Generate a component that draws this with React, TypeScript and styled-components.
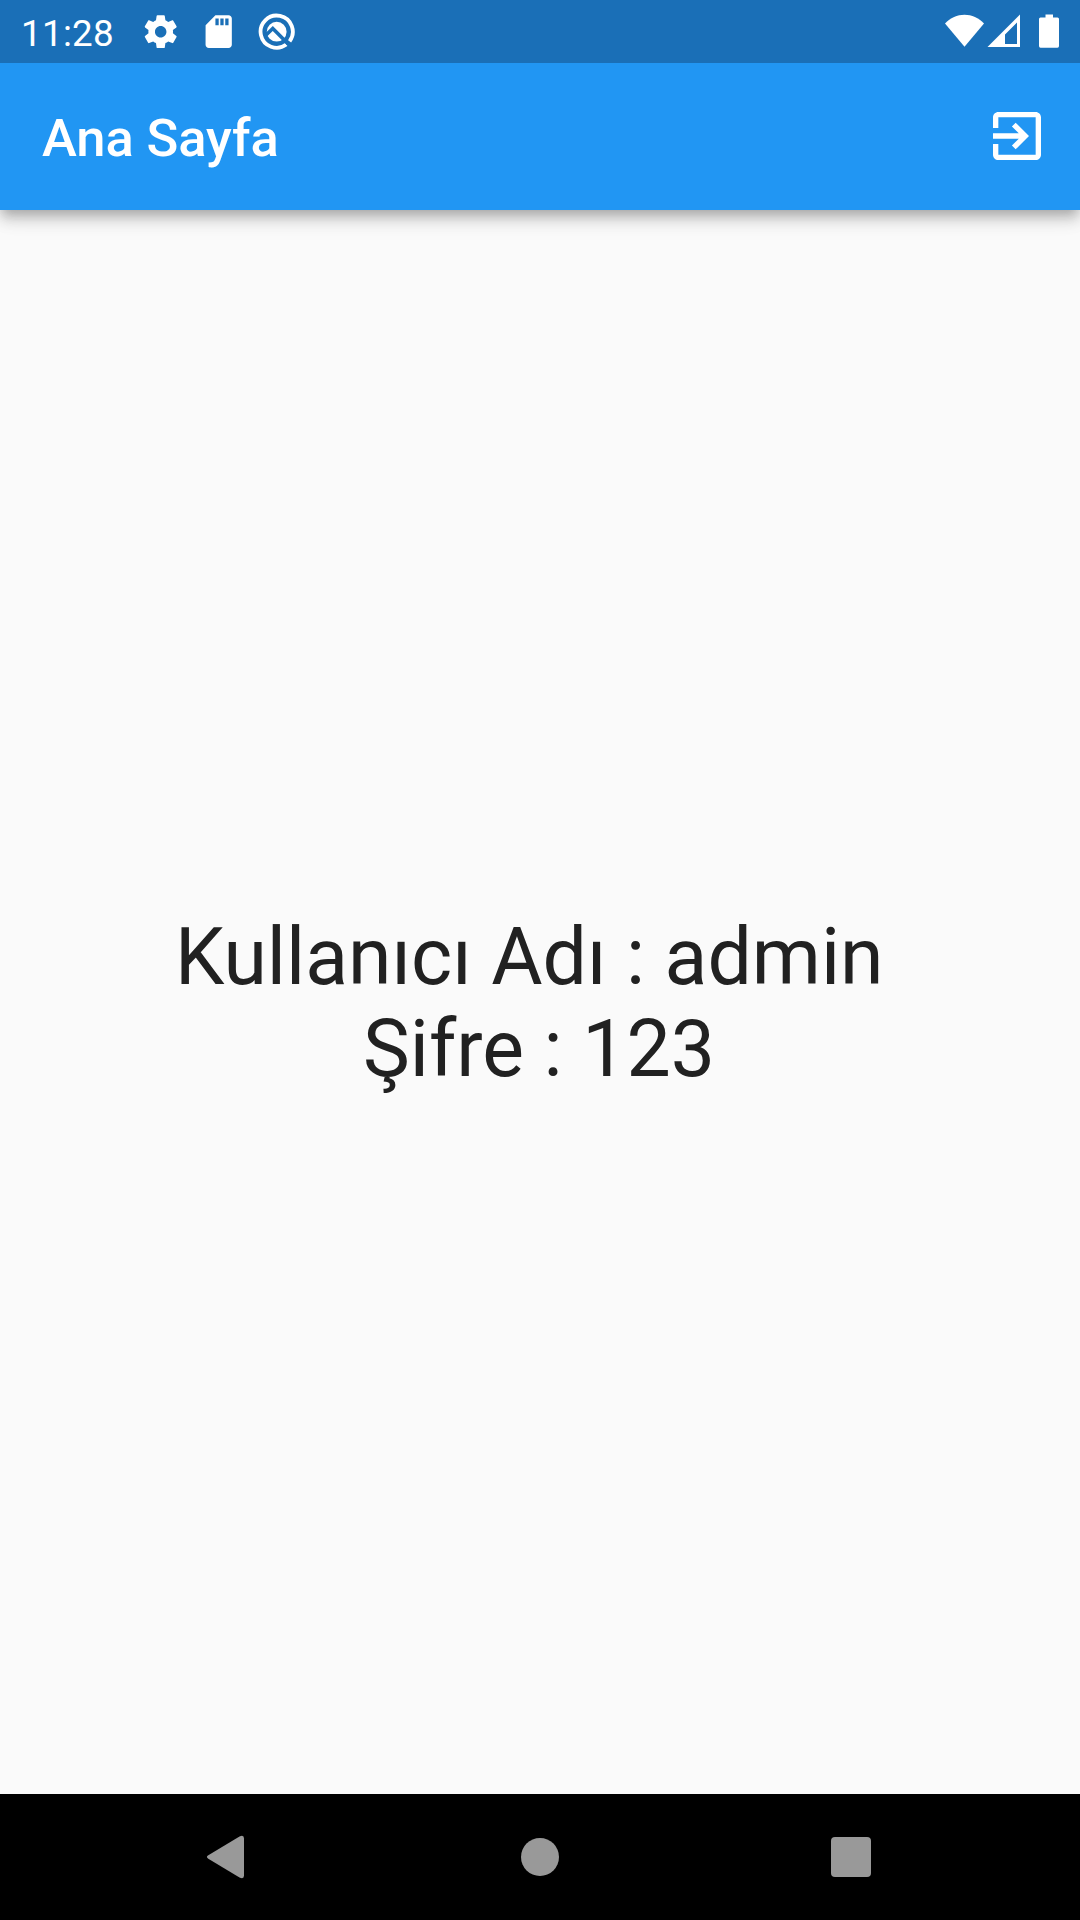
import React from "react";
import styled, { createGlobalStyle } from "styled-components";

const GlobalStyle = createGlobalStyle`
  body { margin: 0; background: #fafafa; font-family: Roboto, "Noto Sans", sans-serif; }
`;

const Screen = styled.div`
  display: flex;
  flex-direction: column;
  width: 1080px;
  height: 1920px;
  overflow: hidden;
  background: #fafafa;
`;

const Header = styled.header`
  z-index: 1;
  background: #2196f3;
  box-shadow:
    0 5.25px 10.5px -2.6px rgba(0, 0, 0, 0.2),
    0 10.5px 13.1px 0 rgba(0, 0, 0, 0.13),
    0 2.6px 26.25px 0 rgba(0, 0, 0, 0.1);
`;

const StatusBar = styled.div`
  display: flex;
  align-items: center;
  justify-content: space-between;
  height: 63px;
  padding: 0 16px 0 21px;
  background: #1a6fb7;
`;

const StatusGroup = styled.div<{ $gap: number }>`
  display: flex;
  align-items: center;
  gap: ${(p) => p.$gap}px;
`;

const Clock = styled.span`
  width: 101px;
  color: #fff;
  font-size: 36.75px;
  letter-spacing: 0.3px;
  line-height: 43px;
  padding-top: 3px;
`;

const Glyph = styled.svg<{ $w: number; $h: number }>`
  display: block;
  flex: none;
  width: ${(p) => p.$w}px;
  height: ${(p) => p.$h}px;
  fill: #fff;
`;

const Toolbar = styled.div`
  display: flex;
  align-items: center;
  justify-content: space-between;
  height: 147px;
  padding: 0 31px 0 42px;
`;

const Title = styled.h1`
  margin: 0;
  padding-top: 2px;
  color: #fff;
  font-size: 52.5px;
  font-weight: 500;
  letter-spacing: -0.1px;
  line-height: 62px;
`;

const IconButton = styled.button`
  padding: 0 0 1px;
  border: 0;
  background: none;
`;

const Content = styled.main`
  display: flex;
  flex: 1;
  flex-direction: column;
  align-items: center;
  justify-content: center;
  padding: 2px 2px 0 0;
`;

const Line = styled.div`
  color: #212121;
  font-size: 78.75px;
  line-height: 92px;
  white-space: pre;
`;

const NavBar = styled.nav`
  display: grid;
  grid-template-columns: repeat(3, 311px);
  justify-content: center;
  align-items: center;
  justify-items: center;
  height: 126px;
  background: #000;
`;

const NavGlyph = styled(Glyph)`
  fill: #999;
`;

export default function App() {
  return (
    <Screen>
      <GlobalStyle />
      <Header>
        <StatusBar>
          <StatusGroup $gap={18.6}>
            <Clock>11:28</Clock>
            <Glyph $w={39.4} $h={39.4} viewBox="0 0 24 24">
              <path d="M19.43 12.98c.04-.32.07-.64.07-.98s-.03-.66-.07-.98l2.11-1.65c.19-.15.24-.42.12-.64l-2-3.46c-.12-.22-.39-.3-.61-.22l-2.49 1c-.52-.4-1.08-.73-1.69-.98l-.38-2.65C14.46 2.18 14.25 2 14 2h-4c-.25 0-.46.18-.49.42l-.38 2.65c-.61.25-1.17.59-1.69.98l-2.49-1c-.23-.09-.49 0-.61.22l-2 3.46c-.13.22-.07.49.12.64l2.11 1.65c-.04.32-.07.65-.07.98s.03.66.07.98l-2.11 1.65c-.19.15-.24.42-.12.64l2 3.46c.12.22.39.3.61.22l2.49-1c.52.4 1.08.73 1.69.98l.38 2.65c.03.24.24.42.49.42h4c.25 0 .46-.18.49-.42l.38-2.65c.61-.25 1.17-.59 1.69-.98l2.49 1c.23.09.49 0 .61-.22l2-3.46c.12-.22.07-.49-.12-.64l-2.11-1.65zM12 15.5c-1.93 0-3.5-1.57-3.5-3.5s1.57-3.5 3.5-3.5 3.5 1.57 3.5 3.5-1.57 3.5-3.5 3.5z" />
            </Glyph>
            <Glyph $w={39.4} $h={39.4} viewBox="0 0 24 24">
              <path d="M18 2h-8L4.02 8 4 20c0 1.1.9 2 2 2h12c1.1 0 2-.9 2-2V4c0-1.1-.9-2-2-2zm-6 6h-2V4h2v4zm3 0h-2V4h2v4zm3 0h-2V4h2v4z" />
            </Glyph>
            <Glyph $w={39.4} $h={39.4} viewBox="0 0 39.4 39.4">
              <path d="M29.3 32.6A16.1 16.1 0 1 1 32.6 29.3" fill="none" stroke="#fff" strokeWidth="3.8" />
              <circle cx="19.7" cy="19.7" r="9.9" />
              <path d="M7.5 24.5L15.8 16.5L31 31.7" fill="none" stroke="#1a6fb7" strokeWidth="3.6" />
            </Glyph>
          </StatusGroup>
          <StatusGroup $gap={0}>
            <Glyph $w={119} $h={40} viewBox="0 0 119 40">
              <path d="M0 11.5C10.5-.2 28.5-.2 39 11.5L19.5 34.7Z" />
              <path fillRule="evenodd" d="M42.5 35L75 2.5V35ZM60 32H72V10.5L60 22.5Z" />
              <path d="M100.5 2.5h7.5v3h4.5q1.5 0 1.5 1.5v27q0 1.8-1.5 1.8h-17q-1.5 0-1.5-1.8V7q0-1.5 1.5-1.5h5z" />
            </Glyph>
          </StatusGroup>
        </StatusBar>
        <Toolbar>
          <Title>Ana Sayfa</Title>
          <IconButton aria-label="Çıkış">
            <Glyph $w={64} $h={64} viewBox="0 0 24 24">
              <path d="M10.09 15.59L11.5 17l5-5-5-5-1.41 1.41L12.67 11H3v2h9.67l-2.58 2.59zM19 3H5c-1.11 0-2 .9-2 2v4h2V5h14v14H5v-4H3v4c0 1.1.89 2 2 2h14c1.1 0 2-.9 2-2V5c0-1.1-.9-2-2-2z" />
            </Glyph>
          </IconButton>
        </Toolbar>
      </Header>
      <Content>
        <Line>{"Kullanıcı Adı : admin "}</Line>
        <Line>Şifre : 123</Line>
      </Content>
      <NavBar>
        <NavGlyph $w={50} $h={50} viewBox="4 0 50 50">
          <path d="M8.3 23.3Q5.5 25 8.3 26.7L39.5 45.5Q44 47.5 44 43.5V6.5Q44 2.5 39.5 4.5Z" />
        </NavGlyph>
        <NavGlyph $w={40} $h={40} viewBox="0 0 40 40">
          <circle cx="20" cy="20" r="19" />
        </NavGlyph>
        <NavGlyph $w={40} $h={40} viewBox="0 0 40 40">
          <rect width="40" height="40" rx="4" />
        </NavGlyph>
      </NavBar>
    </Screen>
  );
}
